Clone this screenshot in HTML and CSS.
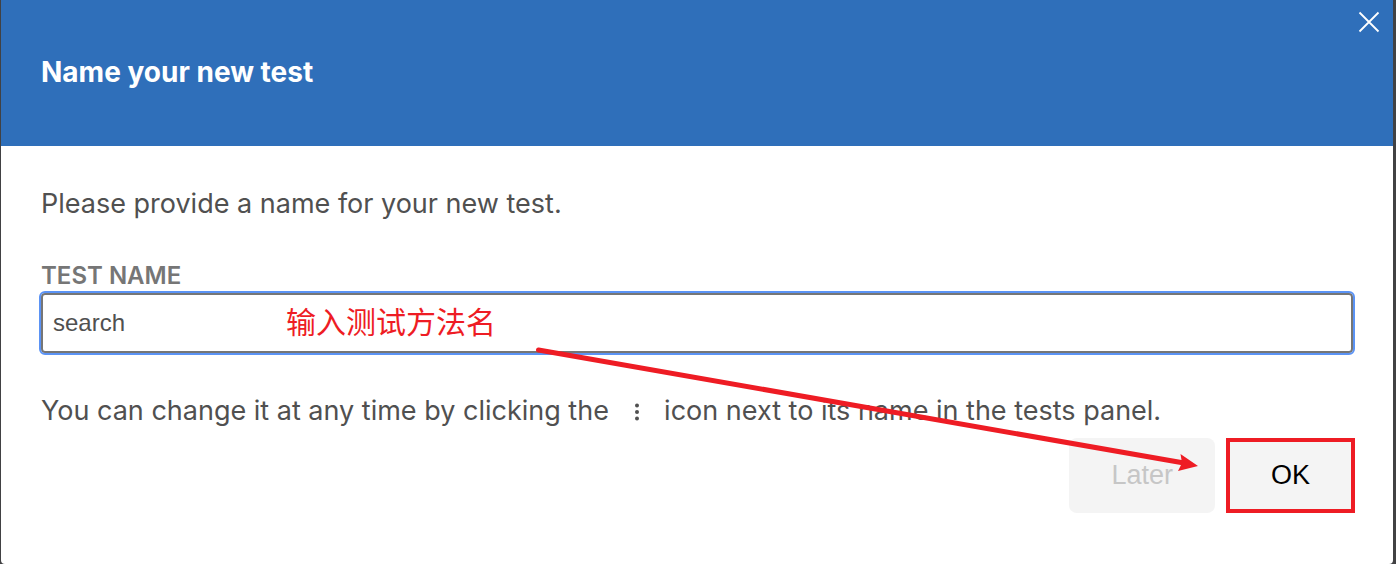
FILE: index.html
```html
<!DOCTYPE html>
<html lang="en">
<head>
<meta charset="utf-8">
<title>Name your new test</title>
<link rel="stylesheet" href="styles.css">
</head>
<body>
<main class="dialog">
  <header class="dialog-header">
    <h1 class="title">Name your new test</h1>
    <button class="close" type="button" aria-label="Close">
      <svg width="22" height="22" viewBox="0 0 22 22" fill="none" stroke="#fff" stroke-width="1.8"><path d="M1.5 1.5 20.5 20.5M20.5 1.5 1.5 20.5"/></svg>
    </button>
  </header>
  <form class="dialog-body">
    <p class="text">Please provide a name for your new test.</p>
    <label class="label" for="test-name">TEST NAME</label>
    <div class="field">
      <input class="input" id="test-name" type="text" value="search">
      <span class="note" lang="zh">输入测试方法名</span>
    </div>
    <p class="text">You can change it at any time by clicking the
      <svg class="dots" width="8" height="20" viewBox="0 0 8 20" fill="#505050"><circle cx="4" cy="3.5" r="2"/><circle cx="4" cy="10" r="2"/><circle cx="4" cy="16.5" r="2"/></svg>
      icon next to its name in the tests panel.</p>
    <div class="actions">
      <button class="button" type="button" disabled>Later</button>
      <button class="button marked" type="submit">OK</button>
    </div>
  </form>
  <svg class="arrow" width="664" height="126" viewBox="0 0 664 126"><path d="M4.500 5 650 118" stroke="#ee1c24" stroke-width="5" stroke-linecap="round"/><path d="M664 121 646.500 109 648 118 644 126Z" fill="#ee1c24"/></svg>
</main>
</body>
</html>
```
FILE: styles.css
```css
* { box-sizing: border-box; }
body {
  margin: 0;
  min-height: 100vh;
  display: flex;
  padding: 0 3px 0 1px;
  background: #414143;
  color: #505050;
  font-family: Inter, "Noto Sans CJK SC", sans-serif;
}
.dialog {
  position: relative;
  flex: 1;
  background: #fff;
  border-radius: 0 0 4px 4px;
}
.dialog-header {
  display: flex;
  justify-content: space-between;
  align-items: flex-start;
  padding: 8px 10px 52px 40px;
  background: #2f6fba;
}
.title {
  margin: 0;
  padding-top: 42px;
  color: #fff;
  font-size: 28px;
  line-height: 44px;
  font-weight: 700;
}
.close {
  display: flex;
  padding: 3px;
  border: 0;
  background: none;
}
.dialog-body {
  display: flex;
  flex-direction: column;
  padding: 36px 40px 50px;
}
.text {
  margin: 0;
  font-size: 27px;
  line-height: 44px;
}
.label {
  margin-top: 34px;
  color: #767676;
  font-size: 24px;
  line-height: 32px;
  font-weight: 600;
}
.field {
  position: relative;
  margin: 1px 0 36px;
}
.input {
  display: block;
  width: 100%;
  height: 60px;
  padding: 0 10px;
  border: 2px solid #767676;
  border-radius: 4px;
  outline: 2px solid #5b93f5;
  background: #fff;
  color: #505050;
  font-family: "Liberation Sans", sans-serif;
  font-size: 24px;
}
.note {
  position: absolute;
  left: 245px;
  top: 5px;
  color: #ee1c24;
  font-family: "Noto Sans CJK SC", sans-serif;
  font-size: 30px;
  line-height: 44px;
}
.dots {
  margin: 0 16px;
  vertical-align: -2px;
}
.actions {
  display: flex;
  justify-content: flex-end;
  gap: 11px;
  margin-top: 5px;
  margin-right: -2px;
}
.button {
  height: 75px;
  padding: 0 42px;
  border: 0;
  border-radius: 8px;
  background: #f4f4f4;
  color: #000;
  font-family: "Liberation Sans", sans-serif;
  font-size: 27px;
}
.button:disabled { color: #c6c6c6; }
.marked {
  padding: 0 41px;
  border: 4px solid #ee1c24;
  border-radius: 0;
}
.arrow {
  position: absolute;
  left: 533px;
  top: 345px;
}
```
